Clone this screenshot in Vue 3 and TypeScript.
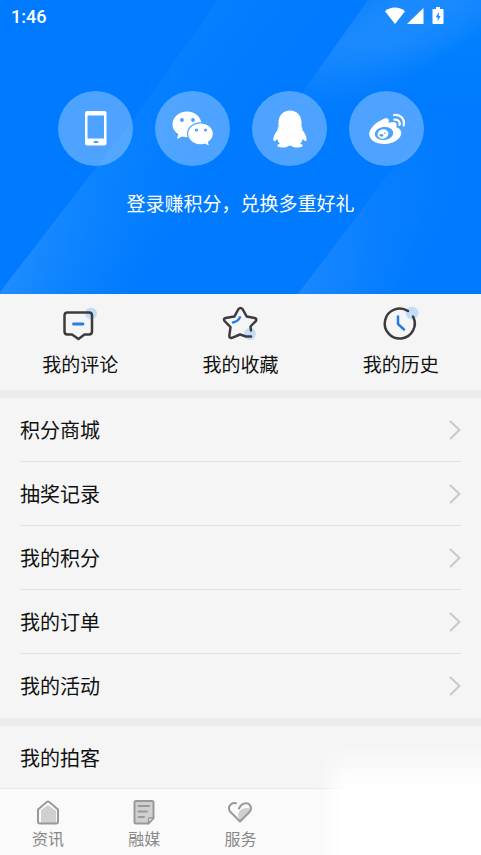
<script setup lang="ts">
interface Item {
  id: string
  label: string
}

interface Group {
  id: string
  arrows: boolean
  rows: string[]
}

const logins: Item[] = [
  { id: 'phone', label: '手机登录' },
  { id: 'wechat', label: '微信登录' },
  { id: 'qq', label: 'QQ登录' },
  { id: 'weibo', label: '微博登录' },
]

const shortcuts: Item[] = [
  { id: 'comments', label: '我的评论' },
  { id: 'favorites', label: '我的收藏' },
  { id: 'history', label: '我的历史' },
]

const groups: Group[] = [
  { id: 'account', arrows: true, rows: ['积分商城', '抽奖记录', '我的积分', '我的订单', '我的活动'] },
  { id: 'works', arrows: false, rows: ['我的拍客'] },
]

const tabs: Item[] = [
  { id: 'news', label: '资讯' },
  { id: 'media', label: '融媒' },
  { id: 'service', label: '服务' },
]
</script>

<template>
  <div class="app">
    <main class="content">
      <header class="hero">
        <svg class="hero-art" viewBox="0 0 481 294" preserveAspectRatio="none" aria-hidden="true">
          <defs>
            <linearGradient id="beamA" gradientUnits="userSpaceOnUse" x1="20" y1="265" x2="110" y2="325">
              <stop offset="0" stop-color="#fff" stop-opacity=".1" />
              <stop offset="1" stop-color="#fff" stop-opacity="0" />
            </linearGradient>
            <linearGradient id="beamFade" gradientUnits="userSpaceOnUse" x1="130" y1="120" x2="205" y2="175">
              <stop offset="0" stop-color="#1088ff" stop-opacity=".4" />
              <stop offset="1" stop-color="#0080ff" stop-opacity="0" />
            </linearGradient>
            <linearGradient id="beamB" gradientUnits="userSpaceOnUse" x1="370" y1="0" x2="420" y2="75">
              <stop offset="0" stop-color="#fff" stop-opacity=".07" />
              <stop offset="1" stop-color="#0088ff" stop-opacity=".35" />
            </linearGradient>
            <linearGradient id="beamC" gradientUnits="userSpaceOnUse" x1="310" y1="280" x2="390" y2="320">
              <stop offset="0" stop-color="#fff" stop-opacity=".1" />
              <stop offset="1" stop-color="#fff" stop-opacity="0" />
            </linearGradient>
            <linearGradient id="fall" x1="0" y1="0" x2="0" y2="1">
              <stop offset="0" stop-color="#fff" />
              <stop offset=".4" stop-color="#fff" />
              <stop offset="1" stop-color="#000" />
            </linearGradient>
            <linearGradient id="rise" x1="0" y1="1" x2="0" y2="0">
              <stop offset="0" stop-color="#fff" />
              <stop offset=".4" stop-color="#999" />
              <stop offset="1" stop-color="#000" />
            </linearGradient>
            <mask id="fallMask"><rect width="481" height="110" fill="url(#fall)" /></mask>
            <mask id="riseMask"><rect y="110" width="481" height="184" fill="url(#rise)" /></mask>
          </defs>
          <path d="M0 292 135 117 218 0H340L130 294H0Z" fill="url(#beamFade)" />
          <path d="M0 292 135 117 190 40V294H0Z" fill="url(#beamA)" mask="url(#riseMask)" />
          <path d="M368 0 290 110H481V0Z" fill="url(#beamB)" mask="url(#fallMask)" />
          <path d="M298 294 390 172 450 90V294Z" fill="url(#beamC)" mask="url(#riseMask)" />
        </svg>

        <div class="status">
          <time>1:46</time>
          <svg class="status-icons" viewBox="0 0 60 20" fill="#fff" aria-hidden="true">
            <path d="M0 4.200C5.500-.6 14.500-.6 20 4.200L10 17Z" />
            <path d="M38.500 1V17H22Z" />
            <path fill-rule="evenodd" d="M51 0h4v2h2.500q1 0 1 1v13q0 1-1 1h-9q-1 0-1-1v-13q0-1 1-1H51ZM53.800 5 50.800 10.200H52.700V14L55.600 9H53.800Z" />
          </svg>
        </div>

        <div class="logins">
          <button v-for="item in logins" :key="item.id" class="login" type="button" :aria-label="item.label">
            <svg v-if="item.id === 'phone'" viewBox="0 0 75 75" aria-hidden="true">
              <path fill="#fff" fill-rule="evenodd" d="M29 20H46.500Q48.500 20 48.500 22V52.500Q48.500 54.500 46.500 54.500H29Q27 54.500 27 52.500V22Q27 20 29 20ZM29.500 24.500V47.500H46V24.500Z" />
              <rect x="35.500" y="50" width="5" height="2" rx="1" fill="#4da2ff" />
            </svg>
            <svg v-else-if="item.id === 'wechat'" viewBox="0 0 75 75" aria-hidden="true">
              <path fill="#fff" d="M32 20.500c8.200 0 14.500 5.700 14.500 13s-6.300 12.800-14.500 12.800q-2.500 0-4.800-.8L22 48l1.300-4.700C19.700 41 17.500 37.600 17.500 33.500c0-7.300 6.300-13 14.500-13Z" />
              <path fill="#fff" stroke="#4da2ff" stroke-width="1.200" d="M45.500 31.800c7.200 0 12.900 5 12.900 11 0 3.500-1.900 6.500-4.900 8.500l1.300 4.300-5-2.400q-2 .6-4.300.6c-7.200 0-12.900-4.900-12.900-11s5.700-11 12.900-11Z" />
              <g fill="#4da2ff">
                <circle cx="27" cy="29" r="1.900" /><circle cx="38" cy="29" r="1.900" />
                <circle cx="41.500" cy="39" r="1.600" /><circle cx="50.500" cy="39" r="1.600" />
              </g>
            </svg>
            <svg v-else-if="item.id === 'qq'" viewBox="0 0 75 75" aria-hidden="true">
              <path fill="#fff" d="M38 19.500c7 0 11.500 5.300 11.500 12v4.200c.8.700 1 1.700.8 3 2.900 3.600 5.200 8.600 4 11-.8 1.200-2.200-.2-3.500-1.800-.4 1.900-1.400 3.400-2.800 4.600 1.700.6 2.800 1.500 2.500 2.600-.6 2-8.800 2-11.500-.4h-2c-2.700 2.400-10.900 2.400-11.500.4-.3-1.100.8-2 2.500-2.600-1.400-1.200-2.400-2.700-2.800-4.600-1.300 1.600-2.700 3-3.500 1.800-1.200-2.400 1.100-7.400 4-11-.2-1.300 0-2.300.8-3v-4.200c0-6.700 4.500-12 11.500-12Z" />
            </svg>
            <svg v-else viewBox="0 0 75 75" aria-hidden="true">
              <path fill="#fff" d="M33.500 28.500c3-1.700 5.800-1.500 6.300.6.200.9 0 1.900-.5 3 3.300-1.300 6.900-1.600 8 .3.600 1 .5 2.400-.1 3.900 3.100.9 5.100 2.900 5.100 5.500 0 5.800-7.400 11.300-17 11.300-8.500 0-15.100-4-15.100-10 0-4.700 5.500-11.200 13.300-14.600Z" />
              <ellipse cx="35" cy="42.500" rx="9.300" ry="6.500" transform="rotate(-8 35 42.500)" fill="#4da2ff" />
              <ellipse cx="34" cy="43" rx="5.500" ry="4.700" transform="rotate(-16 34 43)" fill="#fff" />
              <ellipse cx="32.400" cy="44.300" rx="1.800" ry="1.400" fill="#4da2ff" />
              <circle cx="35.800" cy="42.300" r=".8" fill="#4da2ff" />
              <g fill="none" stroke="#fff" stroke-width="2.200" stroke-linecap="round">
                <path d="M45 24c6.300-1 11.300 4.300 9.600 10.500" />
                <path d="M45.500 28.700c3.500-.5 6 2 5 5.200" />
              </g>
            </svg>
          </button>
        </div>
        <p class="slogan">登录赚积分，兑换多重好礼</p>
      </header>

      <nav class="shortcuts" aria-label="我的内容">
        <a v-for="item in shortcuts" :key="item.id" class="shortcut" :href="`#${item.id}`">
          <svg viewBox="0 0 40 40" fill="none" stroke-linecap="round" stroke-linejoin="round" aria-hidden="true">
            <template v-if="item.id === 'comments'">
              <circle cx="31" cy="9.500" r="6" fill="#c5dcf8" />
              <path d="M7 8.500H29Q32 8.500 32 11.500V27.500Q32 30.500 29 30.500H24.500L18.500 35 12 30.500H7.500Q4.500 30.500 4.500 27.500V11.500Q4.500 8.500 7.500 8.500Z" stroke="#3c3c3e" stroke-width="2.500" />
              <path d="M13.500 20H23" stroke="#2b7ce0" stroke-width="2.800" />
            </template>
            <template v-else-if="item.id === 'favorites'">
              <circle cx="30" cy="30" r="6" fill="#c5dcf8" />
              <path d="M31 26.500 30.500 22.500 36 16.800Q37 14.500 34.500 14L26.800 12.600 22.500 5Q20.500 2.800 18.500 5L14.300 12.600 5.500 14Q3 14.800 4.600 17L10.500 23.200 9.300 32Q9.500 34.600 12 33.800L20 30.500 26 32.500 31 32.500" stroke="#3c3c3e" stroke-width="2.500" />
              <path d="M13 18.500Q18 17.500 20 13.300" stroke="#2b7ce0" stroke-width="2.500" />
            </template>
            <template v-else>
              <circle cx="31" cy="9" r="6.500" fill="#c5dcf8" />
              <path d="M27 7A15 15 0 1 0 32 12.500" stroke="#3c3c3e" stroke-width="2.500" />
              <path d="M17 12.500V20L23 25.500" stroke="#2b7ce0" stroke-width="2.500" />
            </template>
          </svg>
          <span>{{ item.label }}</span>
        </a>
      </nav>

      <ul v-for="group in groups" :key="group.id" class="group">
        <li v-for="label in group.rows" :key="label">
          <a class="row" href="#">
            <span>{{ label }}</span>
            <svg v-if="group.arrows" class="arrow" viewBox="0 0 12 20" fill="none" aria-hidden="true">
              <path d="M1 1 10.500 10 1 19" stroke="#c9c9c9" stroke-width="2" />
            </svg>
          </a>
        </li>
      </ul>
    </main>

    <nav class="tabs" aria-label="主导航">
      <a v-for="tab in tabs" :key="tab.id" class="tab" :href="`#${tab.id}`">
        <svg viewBox="0 0 28 28" fill="none" stroke="#999" stroke-width="2" stroke-linecap="round" stroke-linejoin="round" aria-hidden="true">
          <template v-if="tab.id === 'news'">
            <path d="M7 12 14 7 22 13V25H7Z" fill="#d0d0d0" stroke="none" />
            <path d="M4 11.500 12.800 4Q14 3 15.200 4L24 11.500V23.500Q24 25.500 22 25.500H6Q4 25.500 4 23.500Z" />
          </template>
          <template v-else-if="tab.id === 'media'">
            <path d="M6 3H22Q23.500 3 23.500 4.500V20L18.500 25.500H6Q4.500 25.500 4.500 24V4.500Q4.500 3 6 3Z" fill="#d0d0d0" />
            <path d="M23.500 20H20Q18.500 20 18.500 21.500V25.500Z" fill="#f6f6f6" stroke-width="1.500" />
            <path d="M8.500 8H19M8.500 13.500H17M8.500 19H14" />
          </template>
          <template v-else>
            <path d="M12 18C12 12 19 8 24.500 11L23.500 15 14 23.500Z" fill="#d0d0d0" stroke="none" />
            <path d="M10 5.300C4.500 3.800 1 9.500 4.300 13.800L14 23.500 23.500 14C27 9.500 23.500 4.500 19.500 5.300 16.500 5.500 14.500 7.500 13 10.500" />
          </template>
        </svg>
        <span>{{ tab.label }}</span>
      </a>
    </nav>

    <div class="haze" aria-hidden="true"></div>
  </div>
</template>

<style>
body {
  margin: 0;
}
</style>

<style scoped>
.app {
  position: relative;
  display: flex;
  flex-direction: column;
  height: 100vh;
  overflow: hidden;
  background: #f5f5f5;
  color: #111;
  font-family: "Noto Sans CJK SC", sans-serif;
}

a {
  color: inherit;
  text-decoration: none;
}

.content {
  flex: 1;
  min-height: 0;
  overflow-y: auto;
  scrollbar-width: none;
}

.hero {
  position: relative;
  height: 294px;
  background: #007bff;
  color: #fff;
}

.hero-art {
  position: absolute;
  inset: 0;
  width: 100%;
  height: 100%;
}

.status {
  position: relative;
  display: flex;
  justify-content: space-between;
  align-items: center;
  height: 34px;
  padding: 0 36px 0 11px;
  font: 500 18px/34px Roboto, sans-serif;
}

.status-icons {
  width: 60px;
  height: 20px;
}

.logins {
  position: relative;
  display: flex;
  justify-content: center;
  gap: 22px;
  padding-top: 57px;
}

.login {
  width: 75px;
  height: 75px;
  padding: 0;
  border: 0;
  border-radius: 50%;
  background: rgba(255, 255, 255, 0.3);
  cursor: pointer;
}

.login svg {
  display: block;
  width: 100%;
  height: 100%;
}

.slogan {
  position: relative;
  margin: 23px 0 0;
  font-size: 19px;
  line-height: 28px;
  text-align: center;
}

.shortcuts {
  display: grid;
  grid-template-columns: repeat(3, 1fr);
  height: 96px;
}

.shortcut {
  display: flex;
  flex-direction: column;
  align-items: center;
  padding-top: 10px;
  font-size: 19px;
  line-height: 40px;
}

.shortcut svg {
  width: 40px;
  height: 40px;
}

.group {
  margin: 0;
  padding: 0 20px;
  border-top: 8px solid #ececec;
  list-style: none;
}

.row {
  display: flex;
  justify-content: space-between;
  align-items: center;
  height: 63px;
  border-bottom: 1px solid #e2e2e2;
  font-size: 20px;
}

li:last-child .row {
  border-bottom-color: transparent;
}

.arrow {
  width: 12px;
  height: 20px;
}

.tabs {
  display: grid;
  grid-template-columns: repeat(5, 1fr);
  height: 66px;
  border-top: 1px solid #e8e8e8;
  background: #fafafa;
  color: #888;
}

.tab {
  display: flex;
  flex-direction: column;
  align-items: center;
  padding-top: 9px;
  font-size: 16px;
  line-height: 24px;
}

.tab svg {
  width: 28px;
  height: 28px;
}

.haze {
  position: absolute;
  right: 0;
  bottom: 0;
  width: 34%;
  height: 112px;
  background: #fff;
  mask-image: linear-gradient(to right, transparent, #000 30px), linear-gradient(to bottom, transparent, #000 45px);
  mask-composite: intersect;
  pointer-events: none;
}
</style>
